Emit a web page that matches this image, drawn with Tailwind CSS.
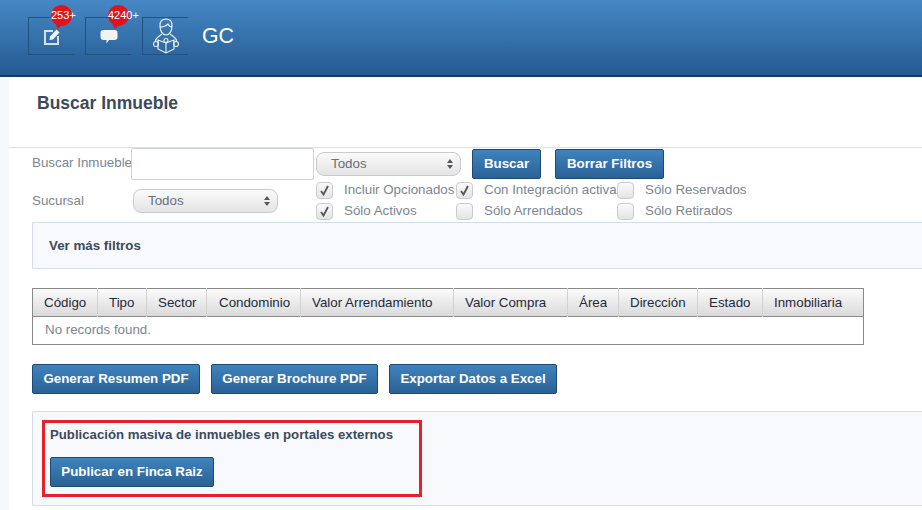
<!DOCTYPE html>
<html lang="en">
<head>
    <meta charset="UTF-8">
    <title>Buscar Inmueble</title>
    <script src="https://cdn.jsdelivr.net/npm/@tailwindcss/browser@4"></script>
</head>
<body class="w-[922px] h-[510px] overflow-hidden bg-white font-['Liberation_Sans',Arial,sans-serif] text-[13.33px] text-[#7b8691]">

    <header class="h-[77px] bg-gradient-to-b from-[#4688c4] to-[#245a92] border-b-2 border-[#17395c] pl-[28px] pt-[17px] flex items-start">
        <div class="relative w-[46px] h-[38px] border-l border-y border-[#22527f] flex items-center justify-center">
            <svg class="w-[18px] h-[18px] mt-[1px]" viewBox="0 0 18 18" fill="none">
                <path d="M10 3H2V16H15V8" stroke="#d5e2ee" stroke-width="2"/>
                <path d="M6.5 12L7 8.5L13.5 1.5L16.5 4.5L10 11.5Z" fill="#eef3f8"/>
            </svg>
            <div class="absolute left-[22px] top-[-13px] w-[21px] h-[21px] rounded-full bg-[#e2131b]"></div>
            <div class="absolute left-[26px] top-[5px] w-0 h-0 border-l-[3px] border-r-[5px] border-t-[6px] border-l-transparent border-r-transparent border-t-[#e2131b]"></div>
            <span class="absolute left-[22px] top-[-10px] text-[11px] leading-[14px] text-white">253+</span>
        </div>
        <div class="relative w-[46px] h-[38px] ml-[11px] border-l border-y border-[#22527f] flex items-center justify-center">
            <svg class="w-[18px] h-[16px] mt-[2px]" viewBox="0 0 18 16">
                <path d="M3.5 1H14.5Q17.5 1 17.5 4V8Q17.5 11 14.5 11H9L6.5 14.5V11H3.5Q0.5 11 0.5 8V4Q0.5 1 3.5 1Z" fill="#f2f2ee"/>
            </svg>
            <div class="absolute left-[22px] top-[-13px] w-[21px] h-[21px] rounded-full bg-[#e2131b]"></div>
            <div class="absolute left-[26px] top-[5px] w-0 h-0 border-l-[3px] border-r-[5px] border-t-[6px] border-l-transparent border-r-transparent border-t-[#e2131b]"></div>
            <span class="absolute left-[22px] top-[-10px] text-[11px] leading-[14px] text-white">4240+</span>
        </div>
        <div class="w-[46px] h-[38px] ml-[11px] border-l border-y border-[#22527f] flex items-center justify-center">
            <svg class="w-[26px] h-[36px]" viewBox="0 0 26 36" fill="none" stroke="#eef3f8" stroke-width="1.1">
                <path d="M7 8C6.5 3.5 9 1 13 1S19.5 3.5 19 8C19 13 16.5 17 13 17S7 13 7 8Z"/>
                <path d="M7 9C10 9 13 8 15 6C16 8 17.5 9 19 9"/>
                <path d="M9 16L5 19C3.5 20 2.5 22 2.5 23.5"/>
                <path d="M17 16L21 19C22.5 20 23.5 22 23.5 23.5"/>
                <circle cx="3" cy="26" r="2.5"/>
                <circle cx="23" cy="26" r="2.5"/>
                <path d="M13 25L5 22V31L13 35L21 31V22Z"/>
                <path d="M13 25V35"/>
                <circle cx="13" cy="22.5" r="2"/>
            </svg>
        </div>
        <span class="ml-[14px] mt-[5px] text-[21.33px] leading-[28px] text-white">GC</span>
    </header>

    <div class="flex">
        <div class="w-[9px] h-[433px] bg-[#f6f8fb]"></div>
        <main class="flex-1 min-w-0">
            <div class="h-[71px] pl-[28px] pt-[16px] border-b border-[#dcdfe3]">
                <h1 class="text-[17.5px] leading-[20px] font-bold text-[#3b4a5c]">Buscar Inmueble</h1>
            </div>

            <!-- filtros -->
            <div class="pl-[23px] flex">
                <div class="w-[284px]">
                    <div class="flex items-start">
                        <label class="w-[99px] pt-[7px] leading-[16px] whitespace-nowrap">Buscar Inmueble</label>
                        <input type="text" class="w-[183px] h-[32px] border border-[#cdd2d6] rounded-[2px] bg-white">
                    </div>
                    <div class="flex items-center mt-[9px]">
                        <label class="w-[101px] leading-[16px]">Sucursal</label>
                        <div class="w-[145px] h-[24px] rounded-[8px] border border-[#c8ccd0] bg-gradient-to-b from-[#fafafa] to-[#e4e4e4] flex items-center justify-between pl-[14px] pr-[6px]">
                            <span class="leading-[16px] text-[#66707a]">Todos</span>
                            <svg class="w-[8px] h-[12px]" viewBox="0 0 8 12" fill="#555"><path d="M4 1L7 5H1Z"/><path d="M4 11L1 7H7Z"/></svg>
                        </div>
                    </div>
                </div>
                <div>
                    <div class="flex items-start h-[34px]">
                        <div class="w-[145px] h-[24px] mt-[4px] rounded-[8px] border border-[#c8ccd0] bg-gradient-to-b from-[#fafafa] to-[#e4e4e4] flex items-center justify-between pl-[14px] pr-[6px]">
                            <span class="leading-[16px] text-[#66707a]">Todos</span>
                            <svg class="w-[8px] h-[12px]" viewBox="0 0 8 12" fill="#555"><path d="M4 1L7 5H1Z"/><path d="M4 11L1 7H7Z"/></svg>
                        </div>
                        <button class="ml-[11px] mt-[1px] w-[69px] h-[30px] rounded-[2px] border border-[#1c4a75] bg-gradient-to-b from-[#3f83bd] to-[#2a6296] font-bold text-white">Buscar</button>
                        <button class="ml-[14px] mt-[1px] w-[109px] h-[30px] rounded-[2px] border border-[#1c4a75] bg-gradient-to-b from-[#3f83bd] to-[#2a6296] font-bold text-white">Borrar Filtros</button>
                    </div>
                    <div class="grid grid-cols-[140px_161px_auto] gap-y-[4px]">
                        <div class="flex">
                            <span class="shrink-0 w-[17px] h-[17px] rounded-[4px] border border-[#c8ccd0] bg-gradient-to-b from-[#fafafa] to-[#e4e4e4] flex items-center justify-center"><svg class="w-[11px] h-[11px]" viewBox="0 0 11 11" fill="none" stroke="#555" stroke-width="1.8"><path d="M2 6L4.5 9.5L9 1"/></svg></span>
                            <span class="ml-[11px] leading-[15px] whitespace-nowrap">Incluir Opcionados</span>
                        </div>
                        <div class="flex">
                            <span class="shrink-0 w-[17px] h-[17px] rounded-[4px] border border-[#c8ccd0] bg-gradient-to-b from-[#fafafa] to-[#e4e4e4] flex items-center justify-center"><svg class="w-[11px] h-[11px]" viewBox="0 0 11 11" fill="none" stroke="#555" stroke-width="1.8"><path d="M2 6L4.5 9.5L9 1"/></svg></span>
                            <span class="ml-[11px] leading-[15px] whitespace-nowrap">Con Integración activa</span>
                        </div>
                        <div class="flex">
                            <span class="shrink-0 w-[17px] h-[17px] rounded-[4px] border border-[#c8ccd0] bg-gradient-to-b from-[#fafafa] to-[#e4e4e4]"></span>
                            <span class="ml-[11px] leading-[15px] whitespace-nowrap">Sólo Reservados</span>
                        </div>
                        <div class="flex">
                            <span class="shrink-0 w-[17px] h-[17px] rounded-[4px] border border-[#c8ccd0] bg-gradient-to-b from-[#fafafa] to-[#e4e4e4] flex items-center justify-center"><svg class="w-[11px] h-[11px]" viewBox="0 0 11 11" fill="none" stroke="#555" stroke-width="1.8"><path d="M2 6L4.5 9.5L9 1"/></svg></span>
                            <span class="ml-[11px] leading-[15px] whitespace-nowrap">Sólo Activos</span>
                        </div>
                        <div class="flex">
                            <span class="shrink-0 w-[17px] h-[17px] rounded-[4px] border border-[#c8ccd0] bg-gradient-to-b from-[#fafafa] to-[#e4e4e4]"></span>
                            <span class="ml-[11px] leading-[15px] whitespace-nowrap">Sólo Arrendados</span>
                        </div>
                        <div class="flex">
                            <span class="shrink-0 w-[17px] h-[17px] rounded-[4px] border border-[#c8ccd0] bg-gradient-to-b from-[#fafafa] to-[#e4e4e4]"></span>
                            <span class="ml-[11px] leading-[15px] whitespace-nowrap">Sólo Retirados</span>
                        </div>
                    </div>
                </div>
            </div>

            <div class="ml-[23px] mt-[2px] h-[47px] pl-[16px] flex items-center border border-r-0 border-[#cfdfed] rounded-l-[2px] bg-[#f8f9fd] font-bold text-[#3b4a5c]">Ver más filtros</div>

            <!-- tabla -->
            <table class="ml-[23px] mt-[19px] w-[832px] table-fixed border-collapse border border-[#8a8a8a]">
                <thead>
                    <tr class="h-[28px] bg-gradient-to-b from-[#fbfbfb] to-[#d9d9d9] text-[#1f2a3a]">
                        <th class="w-[65px] pl-[11px] text-left font-normal border-r border-[#d2d2d2]">Código</th>
                        <th class="w-[49px] pl-[11px] text-left font-normal border-r border-[#d2d2d2]">Tipo</th>
                        <th class="w-[60px] pl-[11px] text-left font-normal border-r border-[#d2d2d2]">Sector</th>
                        <th class="w-[94px] pl-[12px] text-left font-normal border-r border-[#d2d2d2]">Condominio</th>
                        <th class="w-[153px] pl-[11px] text-left font-normal border-r border-[#d2d2d2]">Valor Arrendamiento</th>
                        <th class="w-[114px] pl-[11px] text-left font-normal border-r border-[#d2d2d2]">Valor Compra</th>
                        <th class="w-[51px] pl-[11px] text-left font-normal border-r border-[#d2d2d2]">Área</th>
                        <th class="w-[79px] pl-[11px] text-left font-normal border-r border-[#d2d2d2]">Dirección</th>
                        <th class="w-[65px] pl-[11px] text-left font-normal border-r border-[#d2d2d2]">Estado</th>
                        <th class="pl-[11px] text-left font-normal">Inmobiliaria</th>
                    </tr>
                </thead>
                <tbody>
                    <tr class="h-[28px] border-t border-[#8a8a8a]">
                        <td colspan="10" class="pl-[12px] pb-[2px] text-[#7b8691]">No records found.</td>
                    </tr>
                </tbody>
            </table>

            <div class="ml-[23px] mt-[19px] flex gap-[11px]">
                <button class="w-[168px] h-[30px] rounded-[2px] border border-[#1c4a75] bg-gradient-to-b from-[#3f83bd] to-[#2a6296] font-bold text-white">Generar Resumen PDF</button>
                <button class="w-[167px] h-[30px] rounded-[2px] border border-[#1c4a75] bg-gradient-to-b from-[#3f83bd] to-[#2a6296] font-bold text-white">Generar Brochure PDF</button>
                <button class="w-[168px] h-[30px] rounded-[2px] border border-[#1c4a75] bg-gradient-to-b from-[#3f83bd] to-[#2a6296] font-bold text-white">Exportar Datos a Excel</button>
            </div>

            <div class="relative ml-[23px] mt-[17px] h-[95px] pl-[17px] pt-[15px] border border-r-0 border-[#cfdfed] rounded-l-[2px] bg-[#f8f9fd]">
                <p class="text-[13.2px] leading-[16px] font-bold text-[#3b4a5c]">Publicación masiva de inmuebles en portales externos</p>
                <button class="mt-[14px] w-[164px] h-[30px] rounded-[2px] border border-[#1c4a75] bg-gradient-to-b from-[#3f83bd] to-[#2a6296] font-bold text-white">Publicar en Finca Raiz</button>
                <div class="absolute left-[9px] top-[8px] w-[380px] h-[77px] border-[3px] border-[#e8202a]"></div>
            </div>
        </main>
    </div>
</body>
</html>
